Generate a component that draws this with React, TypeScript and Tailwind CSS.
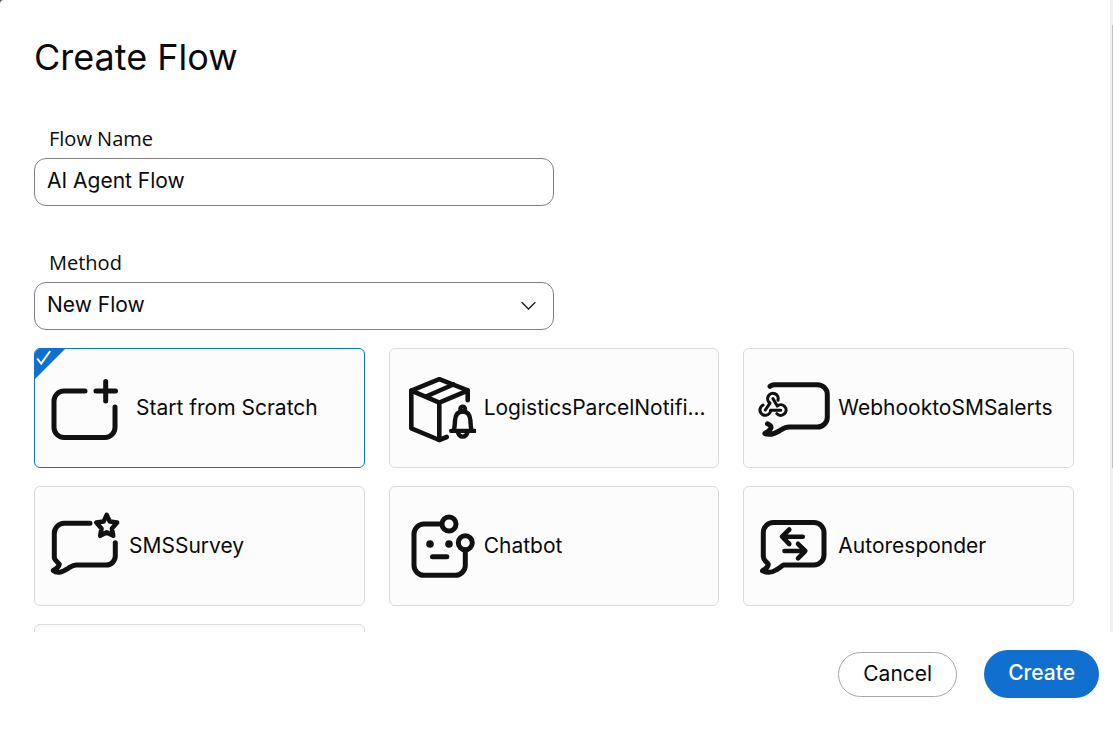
import { useState } from "react";
import type { ReactNode } from "react";

function Icon({ children }: { children: ReactNode }) {
  return (
    <svg
      viewBox="0 0 72 72"
      className="size-18 shrink-0"
      fill="none"
      stroke="#111111"
      strokeWidth="5"
      strokeLinecap="round"
      strokeLinejoin="round"
      aria-hidden="true"
    >
      {children}
    </svg>
  );
}

function ScratchIcon() {
  return (
    <Icon>
      <path d="M36 19H15a10 10 0 0 0-10 10v26.500a10 10 0 0 0 10 10H56a10 10 0 0 0 10-10V35" />
      <path d="M47 19h19.500M56.700 9.500v19.500" />
    </Icon>
  );
}

function ParcelIcon() {
  return (
    <Icon>
      <path strokeWidth="4.600" d="M63.700 28.300v-10L35.300 7.200 7.300 18.600v37.700l28 11.700 7.500-3" />
      <path strokeWidth="4.600" d="M7.300 18.600l28 12 28.400-12M35.300 30.500v37.500M22 24.500l27.300-12" />
      <circle cx="58.700" cy="37" r="2" />
      <path strokeWidth="4.400" d="M50 58c.8-3.500.8-6 1-9.500.4-6.300 3.400-9 7.700-9s7.300 2.700 7.700 9c.2 3.500.2 6 1 9.500" />
      <path strokeWidth="4.400" d="M47.200 58.900h23.400M53.900 60.200a4.900 5.600 0 0 0 9.600 0" />
    </Icon>
  );
}

function WebhookIcon() {
  return (
    <Icon>
      <path d="M12 14.300c1.200-1.100 2.500-1.600 4.500-1.600h43a9.800 9.800 0 0 1 9.800 9.800v22.700a9.800 9.800 0 0 1-9.800 9.800H31c-4 0-6.500 2-9.500 3.700-3.500 2-6.500 3.600-10 3.600-2.300 0-4-.3-4.600-.8 2.300-1.200 5.300-3.500 6-5.500.5-1.700-1.300-3.300-3.400-4.200" />
      <g strokeWidth="3.100">
        <path d="M7.300 38L12 31.100A5.300 5.300 0 1 1 20 28.200" />
        <path d="M15 26.700L19.300 34A5.300 5.300 0 1 1 18.900 41.700" />
        <path d="M22.700 38.200H12.600A5.300 5.300 0 1 1 5 33.200" />
      </g>
    </Icon>
  );
}

function SurveyIcon() {
  return (
    <Icon>
      <path d="M41 13.300H15.300a10 10 0 0 0-10 10v24c0 3 3.500 4.700 5 7-.5 2.700-3.200 4.700-6 6.200 2 1.600 5 2 7.500 1.500 3-.6 5-2.200 7.500-3.700 2.500-1.500 4.500-3.300 8-3.300h30a9 9 0 0 0 9-9V32.700" />
      <path strokeWidth="4.600" d="M57.700 4.900l3 6.500 7.400 1.200-5.200 5.900 1.300 7.300-6.500-3.400-6.500 3.400 1.300-7.300-5.200-5.900 7.400-1.200z" />
    </Icon>
  );
}

function ChatbotIcon() {
  return (
    <Icon>
      <path d="M37 14H20a10 10 0 0 0-10 10v31.300a10 10 0 0 0 10 10h31.300a10 10 0 0 0 10-10V41" />
      <circle cx="45" cy="14" r="7" />
      <circle cx="61.300" cy="32.700" r="7" />
      <circle cx="26" cy="34" r="3.800" fill="#111111" stroke="none" />
      <circle cx="45" cy="34" r="3.800" fill="#111111" stroke="none" />
      <path d="M28.500 46.700h14.300" />
    </Icon>
  );
}

function AutoresponderIcon() {
  return (
    <Icon>
      <path d="M15.300 12.600H56a10 10 0 0 1 10 10V45a10 10 0 0 1-10 10H25.500c-3 2-5 3.600-7.500 5-3.500 2.200-9 3-13.500.8 3-1.600 5.600-3.800 5.800-6.500-1.500-2.500-5-3.800-5-7.800V22.600a10 10 0 0 1 10-10z" />
      <path strokeWidth="4.600" d="M44.800 26.700h-20M31.300 19.500l-7.300 7.200 7.300 7.300M26.500 41h20.300M40 33.800l7.300 7.200-7.300 7.300" />
    </Icon>
  );
}

const templates = [
  { name: "Start from Scratch", icon: <ScratchIcon />, gap: "gap-[15px]" },
  { name: "LogisticsParcelNotifi...", icon: <ParcelIcon />, gap: "gap-2" },
  { name: "WebhooktoSMSalerts", icon: <WebhookIcon />, gap: "gap-2" },
  { name: "SMSSurvey", icon: <SurveyIcon />, gap: "gap-2" },
  { name: "Chatbot", icon: <ChatbotIcon />, gap: "gap-2" },
  { name: "Autoresponder", icon: <AutoresponderIcon />, gap: "gap-2" },
];

export default function App() {
  const [name, setName] = useState("AI Agent Flow");
  const [selected, setSelected] = useState(templates[0].name);

  return (
    <div className="h-screen bg-[#555555] font-['Inter',sans-serif] text-[#0a0a0a]">
      <form className="flex h-full flex-col rounded-tl bg-white" onSubmit={(e) => e.preventDefault()}>
        <div className="flex min-h-0 flex-1">
          <main className="min-w-0 flex-1 overflow-hidden pt-8 pr-9 pl-[34px]">
            <h1 className="text-[36px] leading-[50px]">Create Flow</h1>

            <div className="mt-[42px] w-full max-w-[520px]">
              <label htmlFor="flow-name" className="block pl-[15px] font-['Open_Sans',sans-serif] text-xl leading-[30px]">
                Flow Name
              </label>
              <input
                id="flow-name"
                value={name}
                onChange={(e) => setName(e.target.value)}
                className="mt-1 block h-12 w-full rounded-xl border border-[#808080] bg-white px-3 pb-[3px] text-[21px] outline-none"
              />
            </div>

            <div className="mt-[42px] w-full max-w-[520px]">
              <label htmlFor="method" className="block pl-[15px] font-['Open_Sans',sans-serif] text-xl leading-[30px]">
                Method
              </label>
              <div className="relative mt-1">
                <select
                  id="method"
                  className="block h-12 w-full appearance-none rounded-xl border border-[#808080] bg-white px-3 pb-[3px] text-[21px] outline-none"
                >
                  <option>New Flow</option>
                </select>
                <svg
                  viewBox="0 0 16 16"
                  className="pointer-events-none absolute top-4 right-[17px] size-4"
                  fill="none"
                  stroke="#1a1a1a"
                  strokeWidth="1.3"
                  strokeLinecap="round"
                  aria-hidden="true"
                >
                  <path d="M1 4.500L7.500 11 14 4.500" />
                </svg>
              </div>
            </div>

            <div className="mt-[18px] grid grid-cols-3 gap-x-6 gap-y-[18px]">
              {templates.map((t) => (
                <label
                  key={t.name}
                  className={`relative flex h-[120px] cursor-pointer items-center overflow-hidden rounded-md border bg-[#fcfcfc] pr-2 pl-[14px] ${t.gap} ${
                    selected === t.name ? "border-[#1170cf]" : "border-[#dbdbdb]"
                  }`}
                >
                  <input
                    type="radio"
                    name="template"
                    className="sr-only"
                    checked={selected === t.name}
                    onChange={() => setSelected(t.name)}
                  />
                  {selected === t.name && (
                    <svg viewBox="0 0 30 30" className="absolute top-0 left-0 size-[30px]" aria-hidden="true">
                      <path d="M0 0h30L0 30z" fill="#1170cf" />
                      <path d="M2.200 9.500l4 5L15.200 2" fill="none" stroke="#ffffff" strokeWidth="2" />
                    </svg>
                  )}
                  {t.icon}
                  <span className="truncate text-[21px] leading-8">{t.name}</span>
                </label>
              ))}
              <div className="h-[120px] rounded-md border border-[#dbdbdb] bg-[#fcfcfc]" />
            </div>
          </main>
          <div className="flex w-[3px] justify-end bg-[#f0f0f0] pt-[25px]">
            <div className="h-[73%] w-px bg-[#c1c1c1]" />
          </div>
        </div>

        <footer className="flex h-[100px] shrink-0 items-start justify-end gap-[27px] bg-white pt-[18px] pr-[14px]">
          <button type="button" className="mt-0.5 h-[45px] rounded-full border border-[#a8a8a8] px-6 pb-0.5 text-[21px]">
            Cancel
          </button>
          <button type="submit" className="h-12 rounded-full bg-[#1170cf] px-6 pb-0.5 text-[21px] font-medium text-white">
            Create
          </button>
        </footer>
      </form>
    </div>
  );
}
